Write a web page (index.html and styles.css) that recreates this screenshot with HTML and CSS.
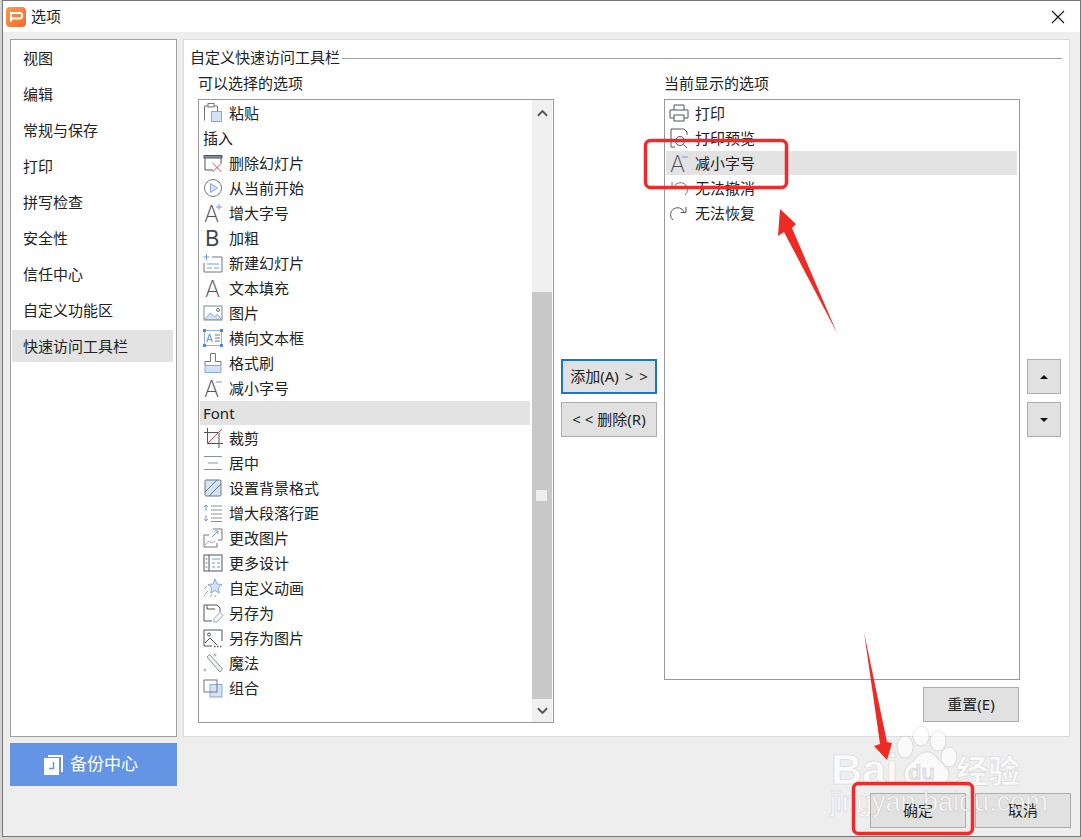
FILE: index.html
```html
<!DOCTYPE html>
<html lang="zh-CN">
<head>
<meta charset="utf-8">
<title>选项</title>
<link rel="stylesheet" href="styles.css">
</head>
<body>
<div class="dialog">
  <header class="titlebar">
    <svg class="app-icon" viewBox="0 0 20 20"><defs><linearGradient id="appg" x1="0" y1="0" x2="1" y2="1"><stop offset="0" stop-color="#fb9a4f"/><stop offset="1" stop-color="#f46a2b"/></linearGradient></defs><rect width="20" height="20" rx="4" fill="url(#appg)"/><path class="app-p" d="M5 14.500V6h8.500a2.700 2.700 0 0 1 0 5.500H5"/></svg>
    <span class="title-text">选项</span>
    <svg class="close-icon" viewBox="0 0 14 14"><path d="M1 1l12 12M13 1L1 13"/></svg>
  </header>
  <div class="main">
    <aside class="sidebar">
      <nav class="nav">
        <a class="nav-item">视图</a>
        <a class="nav-item">编辑</a>
        <a class="nav-item">常规与保存</a>
        <a class="nav-item">打印</a>
        <a class="nav-item">拼写检查</a>
        <a class="nav-item">安全性</a>
        <a class="nav-item">信任中心</a>
        <a class="nav-item">自定义功能区</a>
        <a class="nav-item selected">快速访问工具栏</a>
      </nav>
      <button class="backup">
        <svg class="backup-icon" viewBox="0 0 19 20"><path class="bk-back" d="M4 0h15v17h-2V2H4z"/><path class="bk-front" d="M0 3h15v17H0z"/><path class="bk-mark" d="M9.500 7v6.500H5"/></svg>
        <span class="backup-text">备份中心</span>
      </button>
    </aside>
    <div class="content">
      <section class="panel">
        <div class="legend"><span>自定义快速访问工具栏</span><i class="legend-rule"></i></div>
        <div class="cols">
          <div class="col">
            <div class="col-title">可以选择的选项</div>
            <div class="list list-left">
              <ul class="rows rows-left">
                <li class="row"><svg class="ico" viewBox="0 0 20 20"><path class="ln" d="M1.500 17.500V3h3.500M11 3h3.500v5"/><rect class="ln" x="5" y=".5" width="6" height="3.500"/><rect class="bf" x="8.500" y="8.500" width="10" height="10"/></svg><span>粘贴</span></li>
                <li class="row plain"><span>插入</span></li>
                <li class="row"><svg class="ico" viewBox="0 0 20 20"><rect class="ln-bar" x="1" y="2.500" width="18" height="2.500"/><path class="ln-d" d="M2 5v12h8M18 5v5"/><path class="ln-r" d="M9.500 10l9 9M18.500 10l-9 9"/></svg><span>删除幻灯片</span></li>
                <li class="row"><svg class="ico" viewBox="0 0 20 20"><circle class="ln" cx="10" cy="10" r="8.500"/><path class="bf" d="M7.500 5.500l7 4.500-7 4.500z"/></svg><span>从当前开始</span></li>
                <li class="row"><svg class="ico" viewBox="0 0 20 20"><text class="ltr" x="1" y="19">A</text><path class="ln-bl" d="M16 1v6M13 4h6"/></svg><span>增大字号</span></li>
                <li class="row"><svg class="ico" viewBox="0 0 20 20"><text class="ltr-b" x="2" y="18">B</text></svg><span>加粗</span></li>
                <li class="row"><svg class="ico" viewBox="0 0 20 20"><path class="ln-bl" d="M3.500 1v6M.5 4h6"/><path class="ln" d="M9 4h10v15H1V10"/><path class="ln-bl" d="M4 11h12M4 15h5M11 15h5"/></svg><span>新建幻灯片</span></li>
                <li class="row"><svg class="ico" viewBox="0 0 20 20"><text class="ltr" x="2" y="19">A</text></svg><span>文本填充</span></li>
                <li class="row"><svg class="ico" viewBox="0 0 20 20"><rect class="ln-fill" x="1" y="3" width="18" height="14"/><path class="bf" d="M1.500 16.500l6-6.500 4 3.500 3-2 4 5z"/><circle class="ln" cx="15" cy="7" r="1.500"/></svg><span>图片</span></li>
                <li class="row"><svg class="ico" viewBox="0 0 20 20"><rect class="bl-box" x="1.500" y="2.500" width="17" height="15"/><text class="ltr-s" x="3" y="13.500">A</text><path class="ln" d="M12 7h5M12 10h5M12 13h5"/><path class="corner" d="M0 1h3v3H0zM17 1h3v3h-3zM0 16h3v3H0zM17 16h3v3h-3z"/></svg><span>横向文本框</span></li>
                <li class="row"><svg class="ico" viewBox="0 0 20 20"><path class="ln" d="M7.500.5h5v8h5.500v4H2v-4h5.500z"/><path class="bf" d="M2 12.500h16v7H2z"/></svg><span>格式刷</span></li>
                <li class="row"><svg class="ico" viewBox="0 0 20 20"><text class="ltr" x="1" y="19">A</text><path class="ln-bl" d="M13 4h6"/></svg><span>减小字号</span></li>
                <li class="row plain selected"><span>Font</span></li>
                <li class="row"><svg class="ico" viewBox="0 0 20 20"><path class="ln-d" d="M4.500 0v15.500H20M1 4.500h15V20"/><path class="ln-r" d="M5 15L19 1"/></svg><span>裁剪</span></li>
                <li class="row"><svg class="ico" viewBox="0 0 20 20"><path class="ln-mid" d="M1 3.500h18M5 10h10M1 16.500h18"/></svg><span>居中</span></li>
                <li class="row"><svg class="ico" viewBox="0 0 20 20"><rect class="ln-box" x="2" y="2" width="16" height="16" rx="1"/><path class="ln" d="M2 14L14 2M6 18L18 6"/></svg><span>设置背景格式</span></li>
                <li class="row"><svg class="ico" viewBox="0 0 20 20"><path class="ln-bl" d="M3 2v6M1 4l2-2 2 2M3 12v6M1 16l2 2 2-2"/><path class="ln-mid" d="M8 3h11M8 7h11M8 11h11M8 15h11M8 18.500h11"/></svg><span>增大段落行距</span></li>
                <li class="row"><svg class="ico" viewBox="0 0 20 20"><path class="ln" d="M1 7h5M1 7v12h13v-4M10 1h9v11h-4"/><path class="ln-bl" d="M9 9l6-6M12 3h3v3"/><path class="ln-soft" d="M2 17l4-4 3 2 3-2"/></svg><span>更改图片</span></li>
                <li class="row"><svg class="ico" viewBox="0 0 20 20"><rect class="ln-d" x="1" y="2" width="18" height="16"/><path class="ln-d" d="M6 2v16"/><path class="ln-bl" d="M9 6h8M9 10h3M14 10h3M9 14h3M14 14h3"/><path class="ln" d="M2.500 6h2M2.500 10h2M2.500 14h2"/></svg><span>更多设计</span></li>
                <li class="row"><svg class="ico" viewBox="0 0 20 20"><path class="bf" d="M12 1l2 5 5 .5-3.700 3.500 1 5-4.300-2.500-4.300 2.500 1-5L5 6.500 10 6z"/><path class="ln-soft" d="M1 11l3-3M2 16l3-3M7 19l2-3M12 19l1-2M1 18l1-1"/></svg><span>自定义动画</span></li>
                <li class="row"><svg class="ico" viewBox="0 0 20 20"><path class="ln-d" d="M9 18H1V2h13l3 3v4M4 6V2.500M4 6h8"/><path class="bl-pen" d="M11 19v-3.500L17 9.500l3 3-6 6.500z"/></svg><span>另存为</span></li>
                <li class="row"><svg class="ico" viewBox="0 0 20 20"><path class="ln-d" d="M9 18H1V2h18v11"/><path class="ln-d" d="M2 15l5-5 7 7"/><circle class="ln-d" cx="6" cy="6.500" r="1.500"/><path class="ln-dot" d="M11 18.500h9"/></svg><span>另存为图片</span></li>
                <li class="row"><svg class="ico" viewBox="0 0 20 20"><path class="ln-soft2" d="M4 4l2.500-2.500L19.500 16 17 19z"/><path class="ln-soft" d="M12 .5v3M10.500 2h3M2 15.500v3M.5 17h3"/></svg><span>魔法</span></li>
                <li class="row"><svg class="ico" viewBox="0 0 20 20"><rect class="bf" x="7" y="6.500" width="12" height="12.500"/><rect class="ln" x="1" y="2" width="13" height="12"/></svg><span>组合</span></li>
              </ul>
              <div class="scrollbar">
                <div class="sb-btn sb-up"><svg viewBox="0 0 12 8"><path d="M1 7l5-5 5 5"/></svg></div>
                <div class="sb-thumb"><i class="sb-grip"></i></div>
                <div class="sb-btn sb-down"><svg viewBox="0 0 12 8"><path d="M1 1l5 5 5-5"/></svg></div>
              </div>
            </div>
          </div>
          <div class="col-mid">
            <button class="btn focused"><span>添加(A) &gt; &gt;</span></button>
            <button class="btn"><span>&lt; &lt; 删除(R)</span></button>
          </div>
          <div class="col">
            <div class="col-title">当前显示的选项</div>
            <div class="list list-right">
              <ul class="rows rows-right">
                <li class="row"><svg class="ico" viewBox="0 0 20 20"><path class="ln-d" d="M5 7V2h10v5M5 15H1V7h18v8h-4"/><rect class="ln-d" x="5" y="12" width="10" height="6"/></svg><span>打印</span></li>
                <li class="row"><svg class="ico" viewBox="0 0 20 20"><path class="ln-d" d="M6 19H2V1h13l3 3v3"/><circle class="ln-d" cx="11" cy="13" r="4.500"/><path class="ln-d" d="M14.500 16.500L18 20"/></svg><span>打印预览</span></li>
                <li class="row selected"><svg class="ico" viewBox="0 0 20 20"><text class="ltr" x="1" y="19">A</text><path class="ln-bl" d="M13 4h6"/></svg><span>减小字号</span></li>
                <li class="row"><svg class="ico" viewBox="0 0 20 20"><path class="ln" d="M16 17a7 7 0 1 0-11-8M3 4v5.500h5.500"/></svg><span>无法撤消</span></li>
                <li class="row"><svg class="ico" viewBox="0 0 20 20"><path class="ln-d" d="M4 17a7 7 0 1 1 11-8M17 4v5.500h-5.500"/></svg><span>无法恢复</span></li>
              </ul>
            </div>
            <div class="reset-row"><button class="btn"><span>重置(E)</span></button></div>
          </div>
          <div class="col-side">
            <button class="btn btn-sq"><i class="tri tri-up"></i></button>
            <button class="btn btn-sq"><i class="tri tri-down"></i></button>
          </div>
        </div>
      </section>
      <footer class="footer">
        <button class="btn"><span>确定</span></button>
        <button class="btn"><span>取消</span></button>
      </footer>
    </div>
  </div>
</div>
<svg class="overlay" viewBox="0 0 1082 839">
  <g class="wm">
    <ellipse cx="905" cy="747" rx="8" ry="11"/><ellipse cx="921" cy="736" rx="8" ry="10"/><ellipse cx="938" cy="741" rx="8" ry="10"/><ellipse cx="949" cy="757" rx="8" ry="10"/>
    <path d="M927 752c8 0 10 8 17 13 8 6 6 20-6 20-5 0-7-2-11-2s-7 2-12 2c-12 0-14-13-6-20 7-5 10-13 18-13z"/>
    <text class="wm-big" x="831" y="784">Bai</text>
    <text class="wm-du" x="908" y="780">du</text>
    <text class="wm-cn" x="956" y="783">经验</text>
    <text class="wm-url" x="830" y="811">jingyan.baidu.com</text>
  </g>
  <rect class="mark" x="645.500" y="140.500" width="141" height="47" rx="5"/>
  <rect class="mark" x="853.500" y="783.500" width="119" height="50" rx="5"/>
  <path class="arrow" d="M837 333L792 228 796 224 780 209 778 236 784 232z"/>
  <path class="arrow" d="M864 632L880 744 874 746 887 760 892 743 887 742z"/>
</svg>
</body>
</html>
```
FILE: styles.css
```css
* { box-sizing: border-box; }
html, body { margin: 0; height: 100%; overflow: hidden; }
body {
  background: #d4d4d4;
  font-family: "Noto Sans", "Noto Sans CJK SC", sans-serif;
  font-size: 15px;
  line-height: 20px;
  color: #222;
  position: relative;
}
ul { list-style: none; margin: 0; padding: 0; }
button { font: inherit; color: inherit; margin: 0; }

.dialog {
  margin-left: 2px;
  width: 1079px;
  height: 837px;
  background: #eeeeee;
  border: 1px solid #777;
  display: flex;
  flex-direction: column;
}
.titlebar {
  height: 31px;
  background: #fff;
  display: flex;
  align-items: center;
  padding-left: 3px;
  flex: none;
}
.app-icon { width: 20px; height: 20px; flex: none; }
.app-p { fill: none; stroke: #fff; stroke-width: 2; }
.title-text { margin: -2px 0 0 5px; }
.close-icon { width: 14px; height: 14px; margin-left: auto; margin-right: 15px; }
.close-icon path { fill: none; stroke: #111; stroke-width: 1.100; }

.main { display: flex; gap: 6px; padding: 7px 0 0 7px; flex: 1; }
.sidebar { width: 167px; display: flex; flex-direction: column; gap: 6px; flex: none; }
.nav { height: 698px; background: #fff; border: 1px solid #a0a0a0; display: flex; flex-direction: column; }
.nav-item { height: 32px; margin: 2px 3px 2px 1px; padding: 0 0 0 11px; display: flex; align-items: center; flex: none; }
.nav-item.selected { background: #e3e3e3; }
.backup {
  height: 43px;
  background: #6495e4;
  border: 0;
  color: #fff;
  font-size: 17px;
  display: flex;
  align-items: center;
  padding: 0 0 0 34px;
  gap: 7px;
}
.backup-icon { width: 19px; height: 20px; flex: none; }
.backup-text { margin-top: -2px; }
.bk-back, .bk-front { fill: #fff; }
.bk-mark { fill: none; stroke: #6495e4; stroke-width: 1.500; }

.content { width: 887px; flex: none; display: flex; flex-direction: column; }
.panel { height: 698px; background: #fff; border: 1px solid #dcdcdc; padding: 8px 7px 0 6px; flex: none; }
.legend { height: 20px; display: flex; align-items: center; gap: 2px; }
.legend span { flex: none; margin-top: -2px; }
.legend-rule { flex: 1; height: 1px; background: #a0a0a0; }
.cols { display: flex; gap: 7px; padding: 6px 0 0 8px; }
.col { width: 356px; flex: none; }
.col-title { height: 20px; margin-bottom: 5px; line-height: 18px; }
.col-mid { width: 96px; flex: none; padding-top: 285px; display: flex; flex-direction: column; gap: 8px; }
.col-side { width: 34px; flex: none; padding-top: 285px; display: flex; flex-direction: column; gap: 8px; }

.list { background: #fff; border: 1px solid #999; display: flex; }
.list-left { height: 624px; }
.list-right { height: 581px; }
.rows { padding-top: 1px; display: flex; flex-direction: column; gap: 1px; margin-left: 1px; }
.rows-left { width: 330px; }
.rows-right { width: 351px; }
.row { height: 24px; display: flex; align-items: center; gap: 6px; padding-left: 3px; flex: none; }
.row.selected { background: #e3e3e3; }
.ico { width: 20px; height: 20px; flex: none; overflow: visible; }

.scrollbar { width: 20px; margin-left: 2px; display: flex; flex-direction: column; background: #f0f0f0; flex: none; }
.sb-btn { display: flex; align-items: center; justify-content: center; flex: none; }
.sb-btn svg { width: 11px; height: 8px; }
.sb-btn path { fill: none; stroke: #555; stroke-width: 2; }
.sb-up { height: 192px; padding-bottom: 167px; }
.sb-down { height: 23px; }
.sb-thumb { height: 407px; background: #c8c8c8; padding: 198px 4px 0; }
.sb-grip { display: block; width: 11px; height: 11px; background: #eee; }

.btn {
  width: 96px;
  height: 35px;
  background: #e1e1e1;
  border: 1px solid #adadad;
  padding: 0;
  display: flex;
  align-items: center;
  justify-content: center;
  flex: none;
  white-space: pre;
}
.btn span { margin-top: -2px; }
.btn.focused { border: 2px solid #1a78c2; word-spacing: 2px; }
.btn-sq { width: 34px; }
.tri { width: 0; height: 0; border-left: 4px solid transparent; border-right: 4px solid transparent; }
.tri-up { border-bottom: 4px solid #111; }
.tri-down { border-top: 4px solid #111; }
.reset-row { display: flex; justify-content: flex-end; padding: 7px 1px 0 0; }
.footer { display: flex; justify-content: flex-end; gap: 9px; margin: 56px -1px 0 0; }

/* list icons */
.ln, .ln-d, .ln-bar, .ln-r, .ln-bl, .ln-mid, .ln-soft, .ln-soft2, .ln-dot, .bf, .bl-box, .bl-pen, .ln-fill, .ln-box { stroke-width: 1; fill: none; }
.ln { stroke: #6f7783; }
.ln-d { stroke: #4f5661; }
.ln-bar { stroke: #4f5661; fill: #8b929c; }
.ln-r { stroke: #d9525a; }
.ln-bl { stroke: #6f9bd8; }
.ln-mid { stroke: #8b919a; }
.ln-soft { stroke: #a3a8af; }
.ln-soft2 { stroke: #8d949e; fill: #eef1f5; }
.ln-dot { stroke: #555c66; stroke-dasharray: 1.500 1.500; stroke-width: 1.500; }
.ln-fill { stroke: #7d8591; fill: #fff; }
.ln-box { stroke: #6f7783; fill: #d4e2f5; }
.bf { stroke: #88a8d8; fill: #d4e2f5; }
.bl-box { stroke: #8fb0e0; fill: #fff; }
.bl-pen { stroke: #7fa3d8; fill: #fff; }
.corner { fill: #4f86d6; }
.ltr { font-family: "Inter", "Liberation Sans", sans-serif; font-size: 23px; font-weight: 200; fill: #4f5661; }
.ltr-b { font-family: "Inter", "Liberation Sans", sans-serif; font-size: 22px; font-weight: 400; fill: #3f4650; }
.ltr-s { font-family: "Inter", "Liberation Sans", sans-serif; font-size: 10px; font-weight: 400; fill: #4f86d6; }

/* annotations over the dialog */
.overlay { position: absolute; left: 0; top: 0; width: 1082px; height: 839px; pointer-events: none; }
.mark { fill: none; stroke: #ee2a2a; stroke-width: 3.500; }
.arrow { fill: #ee2a24; stroke: none; }
.wm { fill: #fff; fill-opacity: .72; stroke: #000; stroke-opacity: .1; stroke-width: 1; }
.wm-big { font-family: "Liberation Sans", sans-serif; font-weight: 700; font-size: 43px; }
.wm-du { font-family: "Liberation Sans", sans-serif; font-weight: 700; font-size: 22px; fill: #ccc; fill-opacity: .4; }
.wm-cn { font-family: "Noto Sans CJK SC", sans-serif; font-weight: 700; font-size: 32px; }
.wm-url { font-family: "Liberation Sans", sans-serif; font-weight: 400; font-size: 27px; }
```
